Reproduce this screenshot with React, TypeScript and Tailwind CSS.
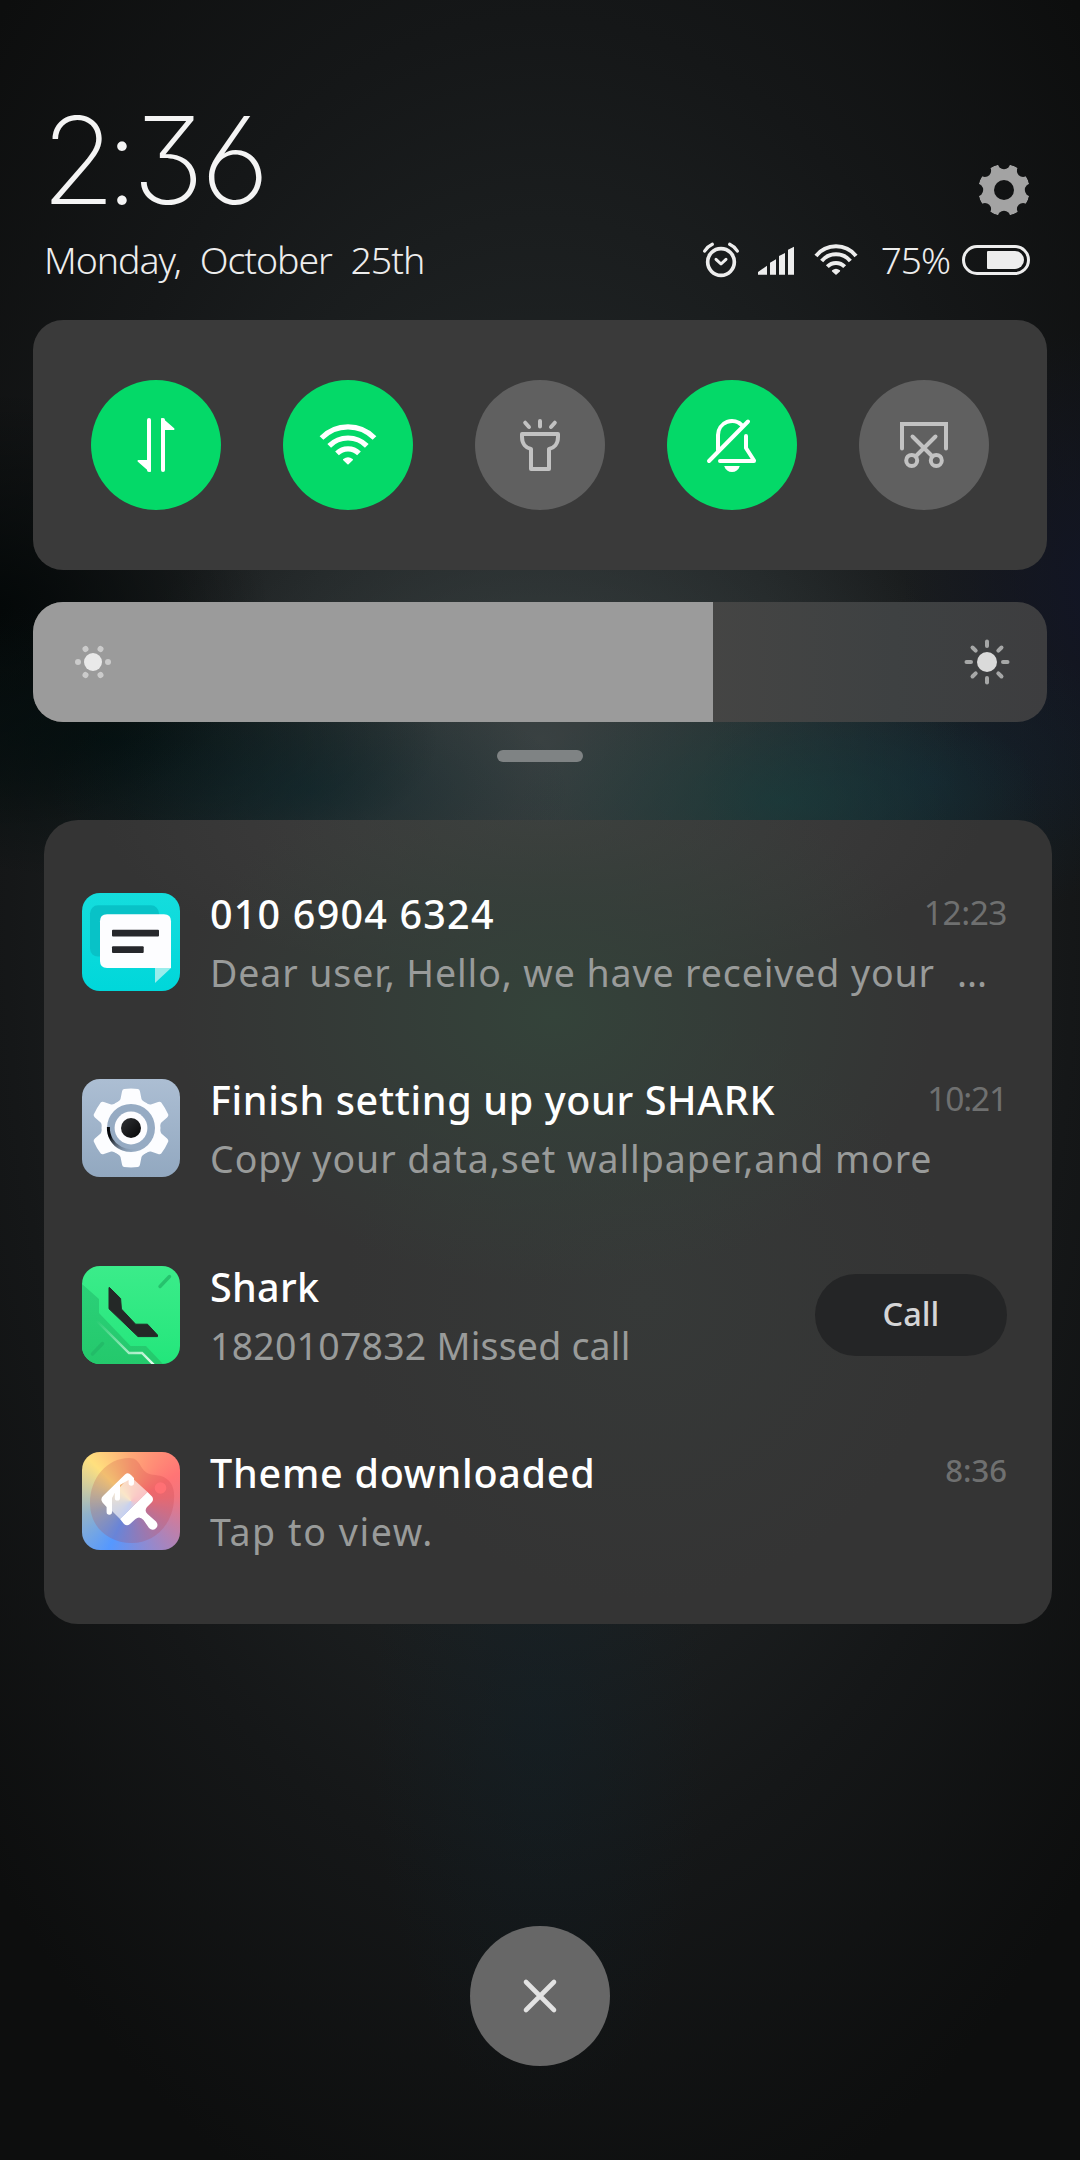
import React from "react";

const Glyph = ({ children, className = "" }: { children: React.ReactNode; className?: string }) => (
  <svg
    viewBox="-32 -32 64 64"
    className={`size-16 ${className}`}
    fill="none"
    stroke="currentColor"
    strokeWidth={4}
    strokeLinecap="round"
    strokeLinejoin="round"
  >
    {children}
  </svg>
);

const DataGlyph = () => (
  <Glyph>
    <path d="M-7 -25V25M7 25V-25" />
    <path d="M-6 26L-17.5 16H-6ZM6 -26L17.5 -16H6Z" fill="currentColor" strokeWidth={2} />
  </Glyph>
);

const WifiGlyph = () => (
  <Glyph>
    <g strokeWidth={5.2} strokeLinecap="butt">
      <path d="M-26.5 -7A37 37 0 0 1 26.5 -7" />
      <path d="M-18.8 .8A26.5 26.5 0 0 1 18.8 .8" />
      <path d="M-11 8.4A15.5 15.5 0 0 1 11 8.4" />
    </g>
    <path d="M-4.2 14.6Q0 11.6 4.2 14.6L0 18.6Z" fill="currentColor" strokeWidth={1.6} />
  </Glyph>
);

const TorchGlyph = () => (
  <Glyph>
    <path d="M0 -24V-18.5M-14.8 -22.3L-11 -18M14.8 -22.3L11 -18" />
    <path d="M-18 -11H18V-8C18 -1 14 3 9 4V24H-9V4C-14 3 -18 -1 -18 -8Z" />
  </Glyph>
);

const MutedGlyph = () => (
  <Glyph>
    <path d="M-23 16L16 -23.5" />
    <path d="M-14 5V-10A14 14 0 0 1 10.5 -19.2" />
    <path d="M14 -9V3L22 15.5V16H-12" />
    <path d="M-7.8 21H7.8C6.5 25 3.6 27 0 27S-6.5 25 -7.8 21Z" fill="currentColor" stroke="none" />
  </Glyph>
);

const SnipGlyph = () => (
  <Glyph>
    <path d="M-22 3.5V-21H22V3.5" strokeLinejoin="miter" />
    <path d="M-11.5 -8.5L8.5 11.5M11.5 -8.5L-8.5 11.5" />
    <circle cx={-12.3} cy={15.4} r={5.5} />
    <circle cx={12.3} cy={15.4} r={5.5} />
  </Glyph>
);

const GearIcon = () => (
  <svg viewBox="-26 -26 52 52" className="size-[52px] text-[#a3a3a3]">
    <mask id="gearCut">
      <circle r={25.9} fill="#fff" />
      <circle r={10} fill="#000" />
      {[0, 45, 90, 135, 180, 225, 270, 315].map((a) => (
        <circle key={a} cx={27} r={6.2} fill="#000" transform={`rotate(${a})`} />
      ))}
    </mask>
    <circle r={25.9} fill="currentColor" mask="url(#gearCut)" />
  </svg>
);

const AlarmIcon = () => (
  <svg viewBox="126 336 114 108" className="h-9 w-[38px]" fill="none" stroke="currentColor" strokeWidth={10} strokeLinecap="round">
    <circle cx={183} cy={396} r={40} strokeWidth={11} />
    <path d="M168 388L183 402L198 388" strokeWidth={9} strokeLinejoin="round" />
    <path d="M134 363Q142 350 157 343M232 363Q224 350 209 343" />
  </svg>
);

const SignalIcon = () => (
  <svg viewBox="294 346 108 87" className="h-[29px] w-9" fill="currentColor">
    <path d="M294 424L321 405V432H294ZM330 396L348 386V432H330ZM357 376L375 367V432H357ZM384 357L402 348V432H384Z" />
  </svg>
);

const StatusWifiIcon = () => (
  <svg viewBox="462 342 132 96" className="h-8 w-11" fill="none" stroke="currentColor" strokeWidth={12}>
    <path d="M468 378A76 76 0 0 1 588 378" />
    <path d="M485 393A56 56 0 0 1 571 393" />
    <path d="M502 410A36 36 0 0 1 554 410" />
    <path d="M518 423Q528 415 538 423L528 432Z" fill="currentColor" strokeWidth={5} strokeLinejoin="round" />
  </svg>
);

const DimSun = () => (
  <svg viewBox="-20 -20 40 40" className="size-10">
    <circle r={9} fill="#e9e9e9" />
    {[0, 60, 120, 180, 240, 300].map((a) => (
      <circle key={a} cx={15} r={3} fill="#cbcbcb" transform={`rotate(${a})`} />
    ))}
  </svg>
);

const BrightSun = () => (
  <svg viewBox="-24 -24 48 48" className="size-12">
    <circle r={10} fill="#dadada" />
    {[0, 45, 90, 135, 180, 225, 270, 315].map((a) => (
      <path key={a} d="M16 0H20.5" stroke="#a6a7a7" strokeWidth={4} strokeLinecap="round" transform={`rotate(${a})`} />
    ))}
  </svg>
);

const tile = "size-[98px] shrink-0 rounded-[18px]";

const MessagesApp = () => (
  <svg viewBox="0 0 98 98" className={`${tile} bg-gradient-to-b from-[#14dddd] to-[#00d7da]`}>
    <rect x={8} y={12.3} width={69} height={51.3} rx={8} fill="#08c2c7" />
    <path d="M25 21.3H82Q89 21.3 89 28.3V75H25Q18 75 18 68V28.3Q18 21.3 25 21.3Z" fill="#fdfdff" />
    <path d="M73 75H89L73 90Z" fill="#9aedec" />
    <rect x={30} y={36.7} width={47} height={6.7} rx={1} fill="#26272b" />
    <rect x={30} y={53.3} width={31.7} height={6.7} rx={1} fill="#26272b" />
  </svg>
);

const SettingsApp = () => (
  <svg viewBox="-49 -49 98 98" className={`${tile} bg-gradient-to-b from-[#acbed3] to-[#92a8c0]`}>
    <defs>
      <linearGradient id="ringShade" x1="0" y1="0" x2="1" y2="0.6">
        <stop offset="0.2" stopColor="#05070a" />
        <stop offset="1" stopColor="#8299b3" stopOpacity="0" />
      </linearGradient>
      <linearGradient id="hub" x1="0" y1="0" x2="1" y2="1">
        <stop offset="0" stopColor="#303235" />
        <stop offset="1" stopColor="#050506" />
      </linearGradient>
    </defs>
    <circle r={29.5} fill="#fcfdff" />
    {[0, 60, 120, 180, 240, 300].map((a) => (
      <path
        key={a}
        d="M-7 -39Q0 -39.8 7 -39Q8.6 -38.6 9 -36.5L10.5 -29Q11.5 -26.5 17 -23H-17Q-11.5 -26.5 -10.5 -29L-9 -36.5Q-8.6 -38.6 -7 -39Z"
        fill="#fcfdff"
        transform={`rotate(${a})`}
      />
    ))}
    <circle r={24} fill="#96abc3" />
    <path d="M-22.6 -1A22.6 22.6 0 0 0 14 17.8" fill="none" stroke="url(#ringShade)" strokeWidth={3} />
    <circle r={16.4} fill="#fdfdff" />
    <circle r={10} fill="url(#hub)" />
  </svg>
);

const PhoneApp = () => (
  <svg viewBox="0 0 98 98" className={`${tile} bg-gradient-to-b from-[#3bec8a] to-[#22e67b]`}>
    <defs>
      <linearGradient id="trace" x1="0" y1="0" x2="1" y2="1">
        <stop offset="0" stopColor="#e9fff2" stopOpacity="0" />
        <stop offset="1" stopColor="#e9fff2" />
      </linearGradient>
      <linearGradient id="slab" x1="0" y1="0" x2="0" y2="1">
        <stop offset="0" stopColor="#2bd078" />
        <stop offset="1" stopColor="#24c96c" />
      </linearGradient>
    </defs>
    <path d="M0 18L17 33V47L48.6 80H64L81 98H0Z" fill="url(#slab)" />
    <path d="M14.5 54.7L47 87H60L72 99" fill="none" stroke="url(#trace)" strokeWidth={2.4} />
    <path d="M78 20.5L87.5 10.5M10.5 88L20.5 77.5" stroke="#22b866" strokeOpacity={0.8} strokeWidth={3.4} strokeLinecap="round" />
    <path d="M27.5 21.5L38.6 32.5L39.4 43L53.6 58.2H65.5L75.5 69V70.6H56L27 42.8V21.5Z" fill="#242827" stroke="#242827" strokeLinejoin="round" />
  </svg>
);

const ThemesApp = () => (
  <svg
    viewBox="0 0 98 98"
    className={`${tile} bg-[conic-gradient(from_0deg,#ffa877,#ff7475_60deg,#f1757f_85deg,#a984bc_140deg,#5598ff_205deg,#93b3c8_255deg,#ffe07e_315deg,#ffa877)]`}
  >
    <path
      d="M47 6C55 6 57 11 60 16C65 24 71 22 79 24C89 27 93 36 92 47C91 73 72 91 50 91C25 91 8 74 8 51C8 26 25 6 47 6Z"
      fill="#b8383c"
      fillOpacity={0.2}
    />
    <circle cx={78.5} cy={36} r={5.8} fill="#ff7074" />
    <path d="M48 24L65.5 40L38 67L23 52Z" fill="#fff" fillOpacity={0.62} />
    <path
      d="M43 22.5Q46 20 49 23L52 26V31A2.7 2.7 0 0 1 46.6 31V28L38 33V46A2.6 2.6 0 0 1 32.8 46V41L30 46V60A2.7 2.7 0 0 1 24.6 60V55L20.5 50.5Q18 47 21 44Z"
      fill="#fff"
    />
    <path
      d="M65.5 40L70 44.5Q72 47 70 50L65 55Q62 59 65.5 62L74 69.5Q77 73 74 76.2Q70.5 79.3 67 76L61.5 68Q57.5 63.5 53.5 67L48 72Q45 74.5 42 72L38 67Z"
      fill="#fff"
    />
  </svg>
);

const toggles = [
  { name: "Mobile data", on: true, Icon: DataGlyph },
  { name: "Wi-Fi", on: true, Icon: WifiGlyph },
  { name: "Torch", on: false, Icon: TorchGlyph },
  { name: "Mute", on: true, Icon: MutedGlyph },
  { name: "Screenshot", on: false, Icon: SnipGlyph },
];

const notices = [
  {
    App: MessagesApp,
    title: "010 6904 6324",
    titleClass: "tracking-[1.2px]",
    body: "Dear user, Hello, we have received your",
    bodyClass: "tracking-[0.9px]",
    more: true,
    time: "12:23",
    timeClass: "text-[33.5px] tracking-[-0.5px]",
  },
  {
    App: SettingsApp,
    title: "Finish setting up your SHARK",
    titleClass: "tracking-[0.65px]",
    body: "Copy your data,set wallpaper,and more",
    bodyClass: "tracking-[0.95px]",
    time: "10:21",
    timeClass: "text-[33.5px] tracking-[-1.2px]",
  },
  {
    App: PhoneApp,
    title: "Shark",
    titleClass: "tracking-[0.3px]",
    body: "1820107832 Missed call",
    bodyClass: "tracking-[0.2px]",
    action: "Call",
  },
  {
    App: ThemesApp,
    title: "Theme downloaded",
    titleClass: "tracking-[0.75px]",
    body: "Tap to view.",
    bodyClass: "tracking-[1.6px]",
    time: "8:36",
    timeClass: "text-[31px] font-medium -mt-px",
  },
];

export default function App() {
  return (
    <main className="flex h-[2160px] w-[1080px] flex-col overflow-hidden bg-[#0f1010] bg-[radial-gradient(ellipse_260px_120px_at_780px_800px,#15403e90,transparent),radial-gradient(ellipse_230px_150px_at_930px_780px,#10283a80,transparent),radial-gradient(ellipse_260px_110px_at_310px_790px,#04252c70,transparent),radial-gradient(ellipse_330px_140px_at_110px_740px,#010e0ec0,transparent),radial-gradient(ellipse_280px_220px_at_-10px_610px,#000505d8,transparent),radial-gradient(ellipse_200px_260px_at_1100px_590px,#12162ac0,transparent),radial-gradient(ellipse_170px_400px_at_540px_1720px,#10222b60,transparent),radial-gradient(ellipse_420px_330px_at_540px_740px,#40494ac0,transparent),radial-gradient(ellipse_760px_1330px_at_540px_950px,#282d2d,#1f2324_40%,#151718_70%,#0d0e0e)] font-['Noto_Sans',sans-serif]">
      <header className="flex justify-between pt-[100px] pr-[50px] pl-11 text-[#ededed]">
        <div>
          <div className="-ml-[3px] h-[120px] text-[121px] leading-[120px] font-[225] tracking-[-3.5px] text-[#f4f4f4] [font-family:Inter,sans-serif] [font-feature-settings:'cv09','ss01']">
            2<span className="-mr-[3px] -ml-[7px]">:</span>36
          </div>
          <div className="mt-5 text-[37.5px] leading-10 font-[350] tracking-[-1.05px] whitespace-nowrap [word-spacing:10px]">Monday, October 25th</div>
        </div>
        <div className="flex flex-col items-end pt-16">
          <GearIcon />
          <div className="mt-[26px] flex h-9 items-center">
            <AlarmIcon />
            <span className="ml-[18px]"><SignalIcon /></span>
            <span className="ml-5"><StatusWifiIcon /></span>
            <span className="ml-[23px] text-[37px] leading-9 font-[350] tracking-[-1px]">75%</span>
            <div className="ml-3 flex h-[30px] w-[68px] items-center justify-end rounded-full border-[3px] pr-[3px]">
              <div className="h-[18px] w-[37px] rounded-l-[1px] rounded-r-[9px] bg-[#ededed]" />
            </div>
          </div>
        </div>
      </header>

      <section className="mx-[33px] mt-10 flex h-[250px] items-center justify-between rounded-[30px] bg-[#3a3a3a] px-[58px]">
        {toggles.map(({ name, on, Icon }) => (
          <button
            key={name}
            aria-label={name}
            className={`flex size-[130px] items-center justify-center rounded-full ${on ? "bg-[#04d968] text-white" : "bg-[#606060] text-[#c2c2c2]"}`}
          >
            <Icon />
          </button>
        ))}
      </section>

      <section className="mx-[33px] mt-8 flex h-[120px] overflow-hidden rounded-[30px] bg-[linear-gradient(90deg,#434343,#454544_66%,#3e4142_85%,#3d3d3f)]">
        <div className="flex w-[680px] items-center bg-[#9b9b9b] pl-10"><DimSun /></div>
        <div className="flex flex-1 items-center justify-end pr-9"><BrightSun /></div>
      </section>

      <div className="mt-7 h-3 w-[86px] self-center rounded-full bg-[#7f8384]" />

      <section className="mt-[58px] mr-7 ml-11 flex h-[804px] flex-col gap-[88.25px] rounded-[34px] bg-[#343434] bg-[radial-gradient(ellipse_380px_270px_at_510px_195px,#34433a,#34413ab0_40%,transparent),radial-gradient(ellipse_440px_160px_at_500px_0px,#404040,transparent),radial-gradient(ellipse_300px_300px_at_600px_480px,#363938,transparent)] pt-[73px] pr-[45px] pl-[38px]">
        {notices.map(({ App: AppIcon, title, titleClass, body, bodyClass, more, time, timeClass, action }) => (
          <article key={title} className="flex h-[98px] shrink-0 items-start">
            <AppIcon />
            <div className="ml-[30px] flex-1 pt-[2px] whitespace-nowrap">
              <h2 className={`text-[39.5px] leading-[39px] font-[540] text-white ${titleClass}`}>{title}</h2>
              <p className={`mt-[10px] text-[37.5px] leading-[58px] text-[#999b9a] ${bodyClass}`}>
                {body}
                {more && <span className="ml-[22px] tracking-normal">...</span>}
              </p>
            </div>
            {time && (
              <time className={`flex w-0 justify-end leading-[39px] whitespace-nowrap text-[#6f7070] ${timeClass}`}>{time}</time>
            )}
            {action && (
              <button className="mt-2 h-[82px] w-48 rounded-full bg-[#242526] text-[32.5px] font-medium text-[#d5d5d6]">{action}</button>
            )}
          </article>
        ))}
      </section>

      <button
        aria-label="Clear all"
        className="mt-auto mb-[94px] flex size-[140px] shrink-0 items-center justify-center self-center rounded-full bg-[#676767] text-[#e2e2e2]"
      >
        <Glyph><path d="M-14 -14L14 14M14 -14L-14 14" strokeWidth={4.6} /></Glyph>
      </button>
    </main>
  );
}
